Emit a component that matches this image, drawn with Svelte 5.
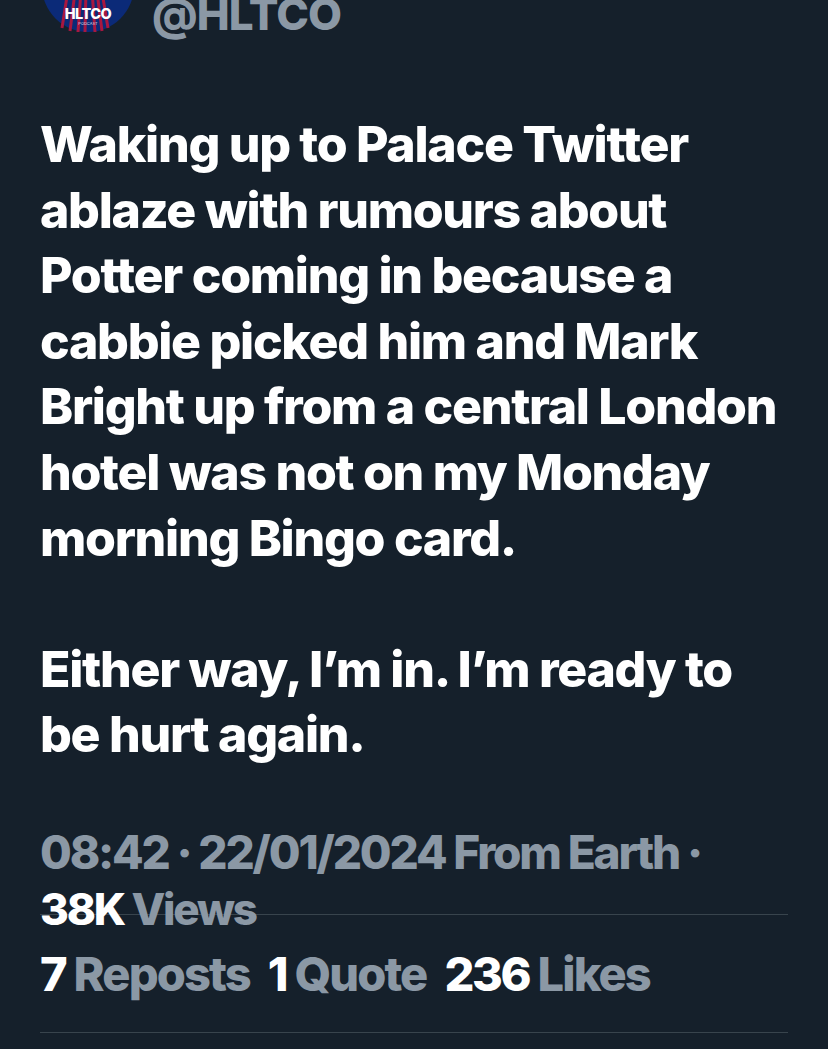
<script lang="ts">
	const stats = [
		{ n: '7', label: 'Reposts' },
		{ n: '1', label: 'Quote' },
		{ n: '236', label: 'Likes' }
	];
</script>

<div class="page">
	<header class="head">
		<svg class="avatar" viewBox="0 0 92 92" aria-hidden="true">
			<circle cx="46" cy="46" r="46" fill="#0b2a78" />
			<path d="M20 88 L26 50 M28 91 L33 52 M36 92 L39 50 M43 92 L44 50 M53 92 L50 50 M60 91 L55 52 M66 88 L60 52" stroke="#a8173f" stroke-width="3" fill="none" />
			<text x="46" y="79" text-anchor="middle" class="logo">HLTCO</text>
			<text x="46" y="85" text-anchor="middle" class="logo-sub">PODCAST</text>
		</svg>
		<span class="handle">@HLTCO</span>
	</header>

	<p class="tweet">Waking up to Palace Twitter ablaze with rumours about Potter coming in because a cabbie picked him and Mark Bright up from a central London hotel was not on my Monday morning Bingo card.</p>
	<p class="tweet second">Either way, I’m in. I’m ready to be hurt again.</p>

	<div class="meta">
		<div>08:42 · 22/01/2024 From Earth ·</div>
		<div class="views"><strong>38K</strong> Views</div>
	</div>

	<div class="stats">
		{#each stats as s}
			<span class="stat"><strong>{s.n}</strong> {s.label}</span>
		{/each}
	</div>
</div>

<style>
	:global(body) {
		background: #15202b;
		overflow: hidden;
	}
	.page {
		height: 1049px;
		box-sizing: border-box;
		padding: 0 40px;
		overflow: hidden;
		background: #15202b;
		color: #fff;
		font-family: Inter, "Liberation Sans", sans-serif;
		font-weight: 800;
	}
	.head {
		display: flex;
		align-items: flex-end;
		gap: 18px;
		height: 32px;
		padding-left: 2px;
	}
	.avatar {
		width: 92px;
		height: 92px;
		flex-shrink: 0;
	}
	.logo {
		font-size: 14.5px;
		font-weight: 800;
		fill: #fff;
		letter-spacing: -0.5px;
	}
	.logo-sub {
		font-size: 4px;
		font-weight: 400;
		fill: #d5d9e6;
	}
	.handle {
		font-size: 44px;
		line-height: 44px;
		color: #8b98a5;
		letter-spacing: -0.9px;
		margin-bottom: -4px;
	}
	.tweet {
		margin: 80px 0 0;
		width: 748px;
		font-size: 50px;
		line-height: 65.6px;
		letter-spacing: -1.3px;
	}
	.second {
		margin-top: 65.6px;
	}
	.meta {
		margin-top: 56px;
		height: 90px;
		border-bottom: 1px solid #38444d;
		font-size: 46px;
		line-height: 57px;
		letter-spacing: -2.2px;
		color: #8b98a5;
	}
	.views {
		font-size: 44px;
	}
	.meta strong,
	.stat strong {
		color: #fff;
		font-weight: 800;
	}
	.stat strong {
		letter-spacing: -2.4px;
	}
	.stats {
		display: flex;
		gap: 18px;
		height: 117px;
		align-items: center;
		border-bottom: 1px solid #38444d;
		font-size: 47px;
		letter-spacing: -1.9px;
		color: #8b98a5;
	}
</style>
